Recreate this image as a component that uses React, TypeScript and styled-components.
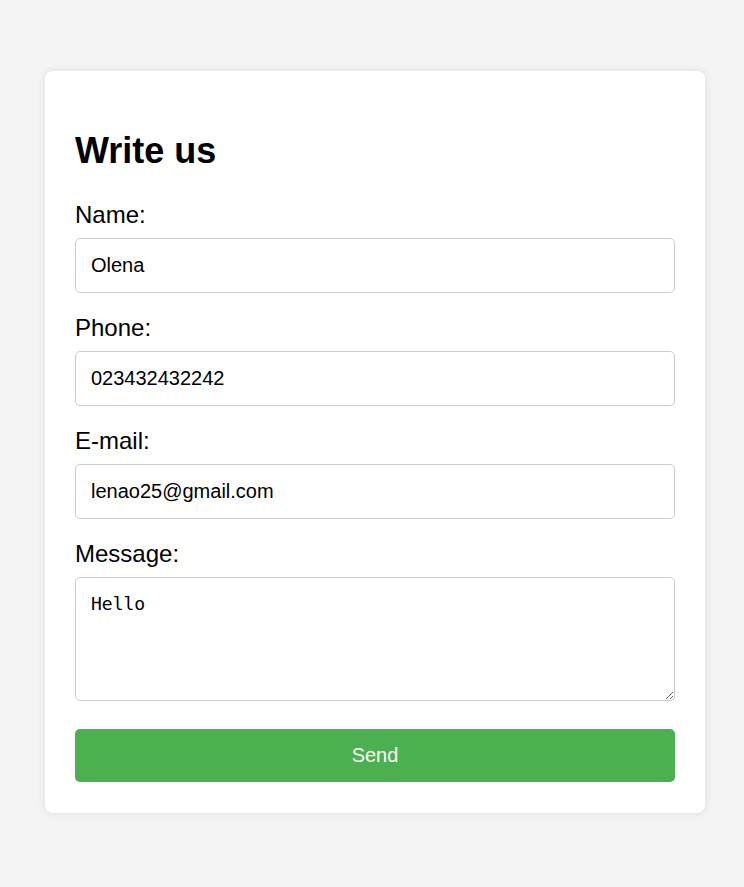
import React from "react";
import styled, { createGlobalStyle } from "styled-components";

const Global = createGlobalStyle`
  html, body { margin: 0; padding: 0; }
  body {
    background: #f4f4f4;
    font-family: "Liberation Sans", Arial, sans-serif;
    color: #000;
  }
`;

const Page = styled.div`
  padding: 71px 39px 75px 45px;
`;

const Card = styled.form`
  width: 660px;
  box-sizing: border-box;
  background: #fff;
  border-radius: 8px;
  box-shadow: 0 0 10px rgba(0, 0, 0, 0.1);
  padding: 30px 30px 31px;
  display: flex;
  flex-direction: column;
`;

const Title = styled.h1`
  margin: 29px 0 30px;
  font-size: 36px;
  line-height: 41px;
  font-weight: bold;
`;

const Field = styled.div<{ $last?: boolean }>`
  display: flex;
  flex-direction: column;
  margin-bottom: ${(p) => (p.$last ? "28px" : "21px")};
`;

const Label = styled.label`
  font-size: 24px;
  line-height: 27px;
  margin-bottom: 10px;
`;

const Input = styled.input`
  box-sizing: border-box;
  width: 100%;
  height: 55px;
  padding: 0 15px;
  border: 1px solid #ccc;
  border-radius: 5px;
  font-family: "Liberation Sans", Arial, sans-serif;
  font-size: 20px;
  color: #000;
  outline: none;
`;

const TextArea = styled.textarea`
  box-sizing: border-box;
  width: 100%;
  height: 124px;
  padding: 15px;
  border: 1px solid #ccc;
  border-radius: 5px;
  font-family: "DejaVu Sans Mono", monospace;
  font-size: 18px;
  color: #000;
  outline: none;
  display: block;
`;

const Button = styled.button`
  height: 53px;
  border: none;
  border-radius: 5px;
  background: #4caf50;
  color: #fff;
  font-family: "Liberation Sans", Arial, sans-serif;
  font-size: 20px;
  cursor: pointer;
`;

export default function App() {
  return (
    <>
      <Global />
      <Page>
        <Card onSubmit={(e) => e.preventDefault()}>
          <Title>Write us</Title>
          <Field>
            <Label htmlFor="name">Name:</Label>
            <Input id="name" defaultValue="Olena" />
          </Field>
          <Field>
            <Label htmlFor="phone">Phone:</Label>
            <Input id="phone" defaultValue="023432432242" />
          </Field>
          <Field>
            <Label htmlFor="email">E-mail:</Label>
            <Input id="email" defaultValue="lenao25@gmail.com" />
          </Field>
          <Field $last>
            <Label htmlFor="msg">Message:</Label>
            <TextArea id="msg" defaultValue="Hello" />
          </Field>
          <Button type="submit">Send</Button>
        </Card>
      </Page>
    </>
  );
}
